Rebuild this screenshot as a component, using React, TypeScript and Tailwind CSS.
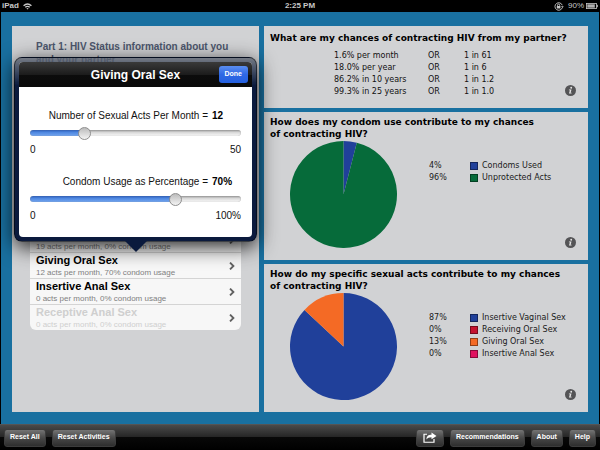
import { useId, useState } from "react";
import type { ReactNode } from "react";

type Slice = { label: string; percent: number; swatch: string; fill: string };
type Activity = { name: string; detail: string; faded?: boolean };

const odds = [
  ["1.6% per month", "1 in 61"],
  ["18.0% per year", "1 in 6"],
  ["86.2% in 10 years", "1 in 1.2"],
  ["99.3% in 25 years", "1 in 1.0"],
];

const condomSlices: Slice[] = [
  { label: "Condoms Used", percent: 4, swatch: "bg-[#20409a]", fill: "#20409a" },
  { label: "Unprotected Acts", percent: 96, swatch: "bg-[#066b3a]", fill: "#066b3a" },
];

const actSlices: Slice[] = [
  { label: "Insertive Vaginal Sex", percent: 87, swatch: "bg-[#20409a]", fill: "#20409a" },
  { label: "Receiving Oral Sex", percent: 0, swatch: "bg-[#c4122f]", fill: "#c4122f" },
  { label: "Giving Oral Sex", percent: 13, swatch: "bg-[#f46a25]", fill: "#f46a25" },
  { label: "Insertive Anal Sex", percent: 0, swatch: "bg-[#e0115f]", fill: "#e0115f" },
];

const activities: Activity[] = [
  { name: "Receiving Oral Sex", detail: "19 acts per month, 0% condom usage" },
  { name: "Giving Oral Sex", detail: "12 acts per month, 70% condom usage" },
  { name: "Insertive Anal Sex", detail: "0 acts per month, 0% condom usage" },
  { name: "Receptive Anal Sex", detail: "0 acts per month, 0% condom usage", faded: true },
];

function StatusBar() {
  return (
    <header className="grid h-3 grid-cols-3 items-center bg-black px-0.5 text-[8px] leading-3 font-bold text-[#c8c8c8]">
      <span className="flex items-center gap-1">
        iPad
        <svg viewBox="0 0 16 12" className="h-[7px] w-[9px]" fill="none" stroke="currentColor" strokeWidth="2.4">
          <path d="M1 4.5 Q8 -1.5 15 4.5" />
          <path d="M4 7.5 Q8 4 12 7.5" />
          <path d="M8 11.5 L6 9.5 Q8 8 10 9.5 Z" fill="currentColor" stroke="none" />
        </svg>
      </span>
      <time className="text-center">2:25 PM</time>
      <span className="flex items-center justify-end gap-1 font-normal">
        <svg viewBox="0 0 20 18" className="h-[9px] w-[10px]" fill="none" stroke="currentColor" strokeWidth="1.8">
          <path d="M16.5 11.5 A7.5 7.5 0 1 1 16.5 6.5" />
          <path d="M14 8.5 L19.5 8.5 L17 12 Z" fill="currentColor" stroke="none" />
          <path d="M7 8 V6.5 A2.2 2.2 0 0 1 11.4 6.5 V8" />
          <rect x="5.6" y="8" width="7.2" height="5" fill="currentColor" stroke="none" />
        </svg>
        <span className="flex items-center gap-0.5">
          90%
          <svg viewBox="0 0 24 12" className="h-[6px] w-3">
            <rect x="0.8" y="0.8" width="20" height="10.4" fill="none" stroke="#c8c8c8" strokeWidth="1.6" />
            <rect x="2.6" y="2.6" width="15" height="6.8" fill="#b0b0b0" />
            <rect x="21.6" y="3.6" width="2" height="4.8" fill="#c8c8c8" />
          </svg>
        </span>
      </span>
    </header>
  );
}

function Card({ title, className, children }: { title: string; className: string; children: ReactNode }) {
  return (
    <section className={"relative flex flex-col bg-[#d1d2d4] font-['DejaVu_Sans',Verdana,sans-serif] " + className}>
      <h2 className="px-1.5 text-[9px] leading-3 font-bold whitespace-pre-line text-black">{title}</h2>
      <div className="flex flex-1">{children}</div>
      <button type="button" aria-label="More information" className="absolute right-3 bottom-3">
        <svg viewBox="0 0 22 22" className="block size-[11px]">
          <circle cx="11" cy="11" r="11" fill="#545456" />
          <circle cx="12.4" cy="5.6" r="1.9" fill="#e4e4e4" />
          <path d="M8 9 H13 L11.3 15.4 H13.4 L13 17 H8 L9.7 10.6 H7.6 Z" fill="#e4e4e4" />
        </svg>
      </button>
    </section>
  );
}

function Pie({ slices }: { slices: Slice[] }) {
  const point = (share: number) => {
    const angle = (share / 100) * 2 * Math.PI;
    return `${50 + 50 * Math.sin(angle)} ${50 - 50 * Math.cos(angle)}`;
  };
  let start = 0;
  const wedges = slices
    .filter((slice) => slice.percent > 0)
    .map((slice) => {
      const from = start;
      start += slice.percent;
      const large = slice.percent > 50 ? 1 : 0;
      return (
        <path
          key={slice.label}
          d={`M50 50 L${point(from)} A50 50 0 ${large} 1 ${point(start)} Z`}
          fill={slice.fill}
        />
      );
    });
  return (
    <svg viewBox="0 0 100 100" className="mt-px ml-[26px] size-[107px] shrink-0">
      {wedges}
    </svg>
  );
}

function Legend({ slices }: { slices: Slice[] }) {
  return (
    <div className="mt-5 ml-8 flex-1">
      <table className="text-[8px] leading-3 text-[#1a1a1a]">
        <tbody>
          {slices.map((slice) => (
            <tr key={slice.label}>
              <td className="w-[41px] min-w-[41px] p-0">{slice.percent}%</td>
              <td className="w-3 min-w-3 p-0">
                <span className={"block size-2 border border-black/40 " + slice.swatch} />
              </td>
              <th scope="row" className="p-0 text-left font-normal whitespace-nowrap">
                {slice.label}
              </th>
            </tr>
          ))}
        </tbody>
      </table>
    </div>
  );
}

function ActivityList() {
  return (
    <ul className="overflow-hidden rounded-md bg-[#f7f7f7]">
      {activities.map((activity) => (
        <li key={activity.name} className="border-b border-[#d4d4d4] last:border-b-0">
          <button type="button" className="flex h-[25px] w-full items-center justify-between px-1.5 text-left">
            <span className={activity.faded ? "text-[#cfcfcf]" : "text-black"}>
              <span className="block text-[11px] leading-[13px] font-bold">{activity.name}</span>
              <span className={"block text-[8px] leading-[11px] " + (activity.faded ? "text-[#cfcfcf]" : "text-[#808080]")}>
                {activity.detail}
              </span>
            </span>
            <svg viewBox="0 0 10 14" className="h-2 w-1.5" fill="none" stroke="#606060" strokeWidth="3.2">
              <path d="M1.5 1 L7.5 7 L1.5 13" />
            </svg>
          </button>
        </li>
      ))}
    </ul>
  );
}

function SliderField({ label, max, unit, initial }: { label: string; max: number; unit: string; initial: number }) {
  const id = useId();
  const [value, setValue] = useState(initial);
  return (
    <div className="flex flex-col text-[10px] leading-4 text-[#111]">
      <div className="flex justify-end gap-1">
        <label htmlFor={id}>{label} =</label>
        <output htmlFor={id} className="w-[29px] font-bold text-black">{value}{unit}</output>
      </div>
      <input
        id={id}
        type="range"
        min={0}
        max={max}
        value={value}
        onChange={(event) => setValue(Number(event.target.value))}
        className="my-1.5 h-1.5 w-full appearance-none rounded-full bg-[linear-gradient(#2a5cba,#4f88e0_40%,#74a6f0),linear-gradient(#9a9a9a,#d8d8d8_40%,#fafafa)] bg-no-repeat shadow-[inset_0_0_1px_#777] [&::-webkit-slider-thumb]:size-[13px] [&::-webkit-slider-thumb]:appearance-none [&::-webkit-slider-thumb]:rounded-full [&::-webkit-slider-thumb]:border [&::-webkit-slider-thumb]:border-[#8e8e8e] [&::-webkit-slider-thumb]:bg-linear-to-b [&::-webkit-slider-thumb]:from-[#bcbcbc] [&::-webkit-slider-thumb]:to-[#f4f4f4]"
        style={{ backgroundSize: `${(value / max) * 100}% 100%, 100% 100%` }}
      />
      <div className="flex justify-between">
        <span>0</span>
        <span>{max}{unit}</span>
      </div>
    </div>
  );
}

function ActivityPopover() {
  return (
    <div
      role="dialog"
      aria-labelledby="popover-title"
      className="absolute top-[31px] left-0.5 w-[243px] rounded-lg border border-black/50 bg-linear-to-b from-[#5d6470]/80 via-[#0b1a3d] via-15% to-[#0b1a3d] p-1 shadow-[0_5px_20px_rgba(0,0,0,0.85)]"
    >
      <div className="overflow-hidden rounded-[4px] bg-white">
        <div className="grid h-[25px] grid-cols-[1fr_auto_1fr] items-center bg-[linear-gradient(#3a3a3a,#1c1c1c_50%,#0c0c0c_50%,#0a0a0a)] px-1">
          <h2 id="popover-title" className="col-start-2 text-xs font-bold text-white">Giving Oral Sex</h2>
          <button
            type="button"
            className="h-[17px] justify-self-end rounded-[3px] bg-linear-to-b from-[#5a8df0] via-[#2f68e4] to-[#2460e0] px-1.5 text-[7px] font-bold text-white"
          >
            Done
          </button>
        </div>
        <div className="flex flex-col gap-4 px-[11px] pt-[21px] pb-[13px]">
          <SliderField label="Number of Sexual Acts Per Month" max={50} unit="" initial={12} />
          <SliderField label="Condom Usage as Percentage" max={100} unit="%" initial={70} />
        </div>
      </div>
      <svg viewBox="0 0 22 11" className="absolute top-full left-1/2 h-[11px] w-[22px] -translate-x-1/2">
        <path d="M0 0 H22 L11 11 Z" fill="#0b1a3d" />
      </svg>
    </div>
  );
}

function BarButton({ children, label }: { children: ReactNode; label?: string }) {
  return (
    <button
      type="button"
      aria-label={label}
      className="flex h-[18px] items-center rounded-[3px] border border-[#3c3c3c] bg-linear-to-b from-[#747474] via-[#484848] to-[#2e2e2e] px-[5px] text-[7px] font-bold text-white"
    >
      {children}
    </button>
  );
}

export default function App() {
  return (
    <div className="flex min-h-screen flex-col bg-black font-['Liberation_Sans',Arial,sans-serif]">
      <StatusBar />
      <main className="mx-px flex flex-1 gap-[5px] bg-[#1970a0] px-[11px] pt-3.5 pb-3">
        <section className="relative w-[247px] shrink-0 bg-[#d1d2d4] px-[18px] pt-3.5">
          <h2 className="mb-[161px] px-1.5 text-[10px] leading-[13px] font-bold text-[#4c566c]">
            Part 1: HIV Status information about you and your partner
          </h2>
          <ActivityList />
        </section>
        <div className="flex min-w-0 flex-1 flex-col gap-1">
          <Card title="What are my chances of contracting HIV from my partner?" className="pt-1.5">
            <div className="mt-1.5 mb-2.5 pl-[70px]">
              <table className="text-[8px] leading-3 text-[#111]">
                <tbody>
                  {odds.map(([chance, ratio]) => (
                    <tr key={chance}>
                      <th scope="row" className="w-[94px] min-w-[94px] p-0 text-left font-normal whitespace-nowrap">{chance}</th>
                      <td className="w-9 min-w-9 p-0">OR</td>
                      <td className="p-0 whitespace-nowrap">{ratio}</td>
                    </tr>
                  ))}
                </tbody>
              </table>
            </div>
          </Card>
          <Card title={"How does my condom use contribute to my chances\nof contracting HIV?"} className="flex-1 pt-1">
            <Pie slices={condomSlices} />
            <Legend slices={condomSlices} />
          </Card>
          <Card title={"How do my specific sexual acts contribute to my chances\nof contracting HIV?"} className="flex-1 pt-1">
            <Pie slices={actSlices} />
            <Legend slices={actSlices} />
          </Card>
        </div>
        <div className="absolute top-[26px] left-3">
          <ActivityPopover />
        </div>
      </main>
      <footer className="flex h-[26px] items-center justify-between border-t border-[#555] bg-[linear-gradient(#4a4a4a,#242424_50%,#080808_50%,#000)] px-1">
        <div className="flex gap-1.5">
          <BarButton>Reset All</BarButton>
          <BarButton>Reset Activities</BarButton>
        </div>
        <div className="flex gap-1.5">
          <BarButton label="Share">
            <svg viewBox="0 0 28 22" className="mx-px h-[11px] w-[14px]" fill="none" stroke="#fff" strokeWidth="2.4">
              <path d="M8 4.5 H2 V20.5 H22 V14" />
              <path d="M7 15 C7 8 11 5.5 17 5.5 V1 L27 8 L17 14.5 V10.5 C12 10.5 9 12 7 15 Z" fill="#fff" stroke="none" />
            </svg>
          </BarButton>
          <BarButton>Recommendations</BarButton>
          <BarButton>About</BarButton>
          <BarButton>Help</BarButton>
        </div>
      </footer>
    </div>
  );
}
